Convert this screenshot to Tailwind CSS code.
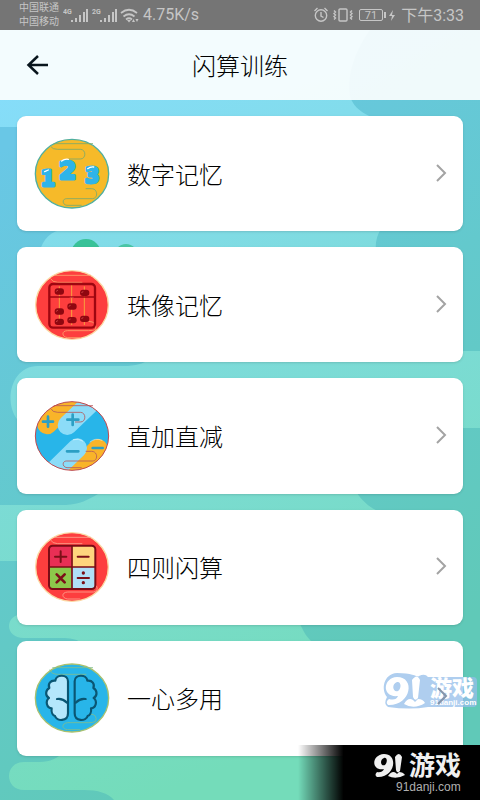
<!DOCTYPE html>
<html lang="zh-CN">
<head>
<meta charset="utf-8">
<meta name="viewport" content="width=device-width, initial-scale=1">
<title>闪算训练</title>
<script src="https://cdn.jsdelivr.net/npm/@tailwindcss/browser@4"></script>
</head>
<body class="font-['Roboto','Noto_Sans_CJK_SC',sans-serif] text-black">
<div class="relative isolate flex min-h-screen flex-col overflow-hidden">

  <!-- Wavy backdrop -->
  <svg class="absolute inset-0 -z-10 h-full w-full" viewBox="0 0 480 800" preserveAspectRatio="none" aria-hidden="true">
    <defs>
      <linearGradient id="deep" gradientUnits="userSpaceOnUse" x1="0" y1="150" x2="330" y2="700">
        <stop offset="0" stop-color="#69c7e6"/><stop offset=".5" stop-color="#63c9cd"/><stop offset="1" stop-color="#60c9b8"/>
      </linearGradient>
      <linearGradient id="pale" gradientUnits="userSpaceOnUse" x1="0" y1="90" x2="250" y2="760">
        <stop offset="0" stop-color="#86ddfa"/><stop offset=".4" stop-color="#7edbdd"/><stop offset="1" stop-color="#74dcba"/>
      </linearGradient>
    </defs>
    <path fill="url(#deep)" d="M0 0H480V800H0Z"/>
    <path fill="url(#pale)" d="M0 0H400C360 30 346 70 350 96C354 110 368 118 390 122L400 210C382 222 374 236 376 252C380 290 420 350 463 351H480V428H400C360 436 344 470 356 492C366 506 376 512 390 515L330 590C300 596 292 612 302 628C310 646 330 656 350 660V800H114C108 793 98 790 84 790H24C4 790 4 762 24 762H40C50 762 58 758 64 752L80 642C76 639 70 638 62 638H24C4 638 4 614 24 614H40V561H0V505H66C80 504 88 500 98 494L60 430H40C0 430 2 366 38 366H128C140 365 145 363 150 358L60 290C30 278 34 236 60 230V127H0Z"/>
    <circle cx="86" cy="254" r="15" fill="#39c298"/>
    <circle cx="126" cy="256" r="12" fill="#4bc6a6"/>
  </svg>

  <!-- System status bar -->
  <div class="flex h-[30px] items-center justify-between bg-[#757575] pr-4 pl-[19px] text-base text-[#c6c6c6]">
    <div class="flex items-center gap-1">
      <div class="text-[10px] leading-[14px]"><p>中国联通</p><p>中国移动</p></div>
      <svg width="76" height="18" viewBox="0 0 76 18" fill="#c6c6c6" aria-hidden="true">
        <g font-family="Roboto, sans-serif" font-size="7" font-weight="700"><text x="0" y="8">4G</text><text x="29" y="8">2G</text></g>
        <path d="M8 14h2v2H8zM12 12h2v4h-2zM16 9h2v7h-2zM20 6h2v10h-2zM23 3h2v13h-2zM37 14h2v2h-2zM41 12h2v4h-2zM45 9h2v7h-2zM49 6h2v10h-2zM52 3h2v13h-2z"/>
        <g fill="none" stroke="#c6c6c6" stroke-width="1.7"><path d="M58 7q8-6.500 16 0M60.500 10.500q5.500-4.500 11 0M63 13.500q3-2.500 6 0"/></g>
        <path d="M64 14h4l-2 2.500zM69 16l1.500-3 1.500 3zM72.500 13l1.500 3 1.500-3z"/>
      </svg>
      <span>4.75K/s</span>
    </div>
    <div class="flex items-center gap-1">
      <svg width="84" height="18" viewBox="0 0 84 18" fill="none" stroke="#c6c6c6" stroke-width="1.400" aria-hidden="true">
        <circle cx="8" cy="9.500" r="5.700"/><path d="M8 6v4l2.500 1.500M1.500 5l3-3M14.500 5l-3-3"/>
        <rect x="26" y="3" width="8" height="12" rx="1"/>
        <path d="M21 4.500l1.500 1.500-1.500 1.500 1.500 1.500-1.500 1.500 1.500 1.500-1.500 1.500M39 4.500L37.500 6 39 7.500 37.500 9l1.500 1.500-1.500 1.500 1.500 1.500"/>
        <rect x="46.500" y="3.500" width="23" height="11" rx="1.500" stroke-width="1"/><path d="M72 6v6" stroke-width="2"/>
        <path d="M80 4l-4 6h3l-1 5 4-6h-3z" fill="#c6c6c6" stroke="none"/>
        <text x="58" y="13" fill="#c6c6c6" stroke="none" font-family="Roboto, sans-serif" font-size="11" text-anchor="middle">71</text>
      </svg>
      <time class="pt-[2px]">下午3:33</time>
    </div>
  </div>

  <header class="grid h-[70px] grid-cols-[1fr_auto_1fr] items-center bg-white/90 px-[25px]">
    <button type="button" aria-label="返回" class="w-6">
      <svg width="24" height="24" viewBox="0 0 24 24" fill="none" stroke="#08151d" stroke-width="2.500" aria-hidden="true"><path d="M13 3L3.500 12 13 21M3.500 12H23"/></svg>
    </button>
    <h1 class="pt-1 text-2xl font-light">闪算训练</h1>
  </header>

  <main class="flex flex-1 flex-col gap-4 px-[17px] pt-4 pb-11">
    <a href="#digits" class="flex min-h-[112px] flex-1 items-center gap-[17px] rounded-[9px] bg-white pr-4 pl-[17px] shadow">
      <svg width="76" height="72" viewBox="27 24 228 216" aria-hidden="true">
        <ellipse cx="141" cy="131" rx="110" ry="103" fill="#f6ba29" stroke="#50afa0" stroke-width="4"/>
        <path d="M86 41H204M78 50Q82 58 98 58H166C184 58 184 87 166 87H130M182 176H200C219 176 220 206 202 206H124C110 207 112 225 126 226H170" fill="none" stroke="#79a96c" stroke-width="2.500"/>
        <g fill="#2fb4e8" stroke="#2fb4e8" stroke-width="9" stroke-linejoin="round" font-family="DejaVu Sans, sans-serif" font-weight="700">
          <text x="47" y="169" font-size="62">1</text><text x="101" y="147" font-size="76">2</text><text x="180" y="160" font-size="62">3</text>
        </g>
        <path d="M59 125l11-5M110 93q9-7 20-5M188 116q8-6 18-5" fill="none" stroke="#fff" stroke-width="4" stroke-linecap="round"/>
      </svg>
      <span class="flex-1 pt-1 text-2xl font-light">数字记忆</span>
      <svg width="12" height="20" viewBox="0 0 12 20" fill="none" stroke="#a3a3a3" stroke-width="2" aria-hidden="true"><path d="M2 1L10 9 2 17"/></svg>
    </a>

    <a href="#beads" class="flex min-h-[112px] flex-1 items-center gap-[17px] rounded-[9px] bg-white pr-4 pl-[17px] shadow">
      <svg width="76" height="72" viewBox="27 24 228 216" aria-hidden="true">
        <ellipse cx="141" cy="132" rx="109" ry="103" fill="#fd3e3e" stroke="#fbd9a4" stroke-width="4"/>
        <path d="M88 43H198M76 52Q82 64 98 64H172M190 181Q217 182 212 205Q206 209 190 209H128C108 209 110 228 128 230H166" fill="none" stroke="#fca36e" stroke-width="2.500"/>
        <path d="M103 76V192M140 70V192M178 76V192" stroke="#f7a23d" stroke-width="3"/>
        <rect x="73" y="69" width="137" height="131" rx="11" fill="none" stroke="#9e0610" stroke-width="7"/>
        <path d="M73 108H210" stroke="#9e0610" stroke-width="5"/>
        <g fill="#8f0710"><rect x="89" y="82" width="28" height="19" rx="9"/><rect x="165" y="86" width="28" height="19" rx="9"/><rect x="127" y="127" width="28" height="19" rx="9"/><rect x="89" y="142" width="28" height="19" rx="9"/><rect x="89" y="173" width="28" height="19" rx="9"/><rect x="127" y="168" width="28" height="19" rx="9"/><rect x="165" y="164" width="28" height="19" rx="9"/></g>
        <path d="M94 92q0-4 5-4M170 96q0-4 5-4M132 137q0-4 5-4M94 152q0-4 5-4M94 183q0-4 5-4M132 178q0-4 5-4M170 174q0-4 5-4M134 109h12" fill="none" stroke="#d55" stroke-width="2"/>
      </svg>
      <span class="flex-1 pt-1 text-2xl font-light">珠像记忆</span>
      <svg width="12" height="20" viewBox="0 0 12 20" fill="none" stroke="#a3a3a3" stroke-width="2" aria-hidden="true"><path d="M2 1L10 9 2 17"/></svg>
    </a>

    <a href="#addsub" class="flex min-h-[112px] flex-1 items-center gap-[17px] rounded-[9px] bg-white pr-4 pl-[17px] shadow">
      <svg width="76" height="72" viewBox="27 24 228 216" aria-hidden="true">
        <clipPath id="disc"><ellipse cx="141" cy="132" rx="110" ry="103"/></clipPath>
        <g clip-path="url(#disc)">
          <path d="M20 20H260V240H20Z" fill="#28b5e9"/>
          <g fill="none" stroke-width="58" stroke-linecap="round">
            <path d="M66 98L170 -2" stroke="#f9b429"/><path d="M219 170L119 270" stroke="#f9b429"/>
            <path d="M127 100L227 4" stroke="#8cdcf8"/><path d="M157 168L57 266" stroke="#8cdcf8"/>
          </g>
          <path d="M195 150q16-14 36-5M145 143q16-5 28 4" fill="none" stroke="#fff" stroke-opacity=".5" stroke-width="3" stroke-linecap="round"/>
        </g>
        <g stroke="#2b9fc4" stroke-width="8" stroke-linecap="round"><path d="M54 89H84M69 74V104M127 83H160M143 68V99M126 178H160M203 168H233"/></g>
        <path d="M86 41H204M78 50Q82 61 98 61H166C184 61 184 90 166 90H150M182 178H200C219 178 220 207 202 207H124C110 208 112 226 126 227H170" fill="none" stroke="#b4595c" stroke-width="2.500"/>
        <ellipse cx="141" cy="132" rx="110" ry="103" fill="none" stroke="#c4494d" stroke-width="3"/>
      </svg>
      <span class="flex-1 pt-1 text-2xl font-light">直加直减</span>
      <svg width="12" height="20" viewBox="0 0 12 20" fill="none" stroke="#a3a3a3" stroke-width="2" aria-hidden="true"><path d="M2 1L10 9 2 17"/></svg>
    </a>

    <a href="#four" class="flex min-h-[112px] flex-1 items-center gap-[17px] rounded-[9px] bg-white pr-4 pl-[17px] shadow">
      <svg width="76" height="72" viewBox="27 24 228 216" aria-hidden="true">
        <ellipse cx="141" cy="132" rx="109" ry="103" fill="#fd3e3e" stroke="#fbd9a4" stroke-width="4"/>
        <path d="M88 43H198M76 50Q82 62 98 62H172M214 188Q222 203 206 207H128C108 208 110 226 128 228H166" fill="none" stroke="#fca38e" stroke-width="2.500"/>
        <path d="M73 69H140V132H73Z" fill="#e82f55"/><path d="M140 69H210V132H140Z" fill="#ffd57e"/><path d="M73 132H140V197H73Z" fill="#8cc84b"/><path d="M140 132H210V197H140Z" fill="#b0dff7"/>
        <rect x="72" y="68" width="139" height="130" rx="11" fill="none" stroke="#7b0c16" stroke-width="6"/>
        <path d="M72 132H211M141 68V198" stroke="#7b0c16" stroke-width="5"/>
        <g stroke="#7b1018" stroke-width="6" stroke-linecap="round"><path d="M90 101H124M107 85V117M158 101H191M158 165H192"/><path d="M95 154L119 178M119 154L95 178" stroke-width="8"/></g>
        <circle cx="175" cy="150" r="5" fill="#7b1018"/><circle cx="175" cy="179" r="5" fill="#7b1018"/>
      </svg>
      <span class="flex-1 pt-1 text-2xl font-light">四则闪算</span>
      <svg width="12" height="20" viewBox="0 0 12 20" fill="none" stroke="#a3a3a3" stroke-width="2" aria-hidden="true"><path d="M2 1L10 9 2 17"/></svg>
    </a>

    <a href="#multitask" class="flex min-h-[112px] flex-1 items-center gap-[17px] rounded-[9px] bg-white pr-4 pl-[17px] shadow">
      <svg width="76" height="72" viewBox="27 24 228 216" aria-hidden="true">
        <ellipse cx="141" cy="132" rx="110" ry="102" fill="#28b5e9" stroke="#a9c16f" stroke-width="4"/>
        <path d="M82 41H204M74 47Q80 61 98 61H184M196 180Q218 182 212 202Q206 206 190 206H128C108 208 110 226 128 227H166" fill="none" stroke="#7fbd8e" stroke-width="2.500"/>
        <g stroke="#0a5673" stroke-width="6.500" stroke-linecap="round" stroke-linejoin="round">
          <path fill="#b4e7fc" d="M129 82C129 60 93 60 91 80C76 78 68 90 73 102C61 108 60 126 72 132C60 142 65 162 80 163C78 176 84 184 90 186C94 202 129 204 129 178Z"/>
          <path fill="none" d="M149 82C149 60 185 60 187 80C202 78 210 90 205 102C217 108 218 126 206 132C218 142 213 162 198 163C200 176 194 184 188 186C184 202 149 204 149 178Z"/>
          <path fill="none" d="M96 135Q112 132 126 146M182 135Q166 132 152 146"/>
        </g>
      </svg>
      <span class="flex-1 pt-1 text-2xl font-light">一心多用</span>
      <svg width="12" height="20" viewBox="0 0 12 20" fill="none" stroke="#a3a3a3" stroke-width="2" aria-hidden="true"><path d="M2 1L10 9 2 17"/></svg>
    </a>
  </main>

  <!-- Translucent site mark -->
  <svg class="pointer-events-none absolute right-0 bottom-[80px]" width="100" height="58" viewBox="-2 -10 100 58" role="img" aria-label="91游戏 91danji.com">
    <g fill="#94bee9" stroke="#94bee9" stroke-linejoin="round" opacity=".75">
      <path d="M15 1C32 1 36 6 37 4Q43 1 46 5H91Q95 5 95 9V31Q95 35 91 35H46Q28 38 6 35Q1 32 5 25C-1 18 1 2 15 1Z" stroke="none"/>
    </g>
    <g fill="#fff">
      <path fill-rule="evenodd" d="M15 5C34 5 29 34 6 33Q3 30 7 27Q14 29 16 24C0 26 0 6 15 5ZM15 10C9 12 11 21 16 19C20 16 19 9 15 10Z"/>
      <path d="M30 8q5-7 8 0l-2 18q-3 4-5-1zM22 32q4-7 9-4l2 2 3-3q5 0 7 4q-11 7-21 1z"/>
      <text x="48" y="24" font-family="Noto Sans CJK SC, sans-serif" font-size="22" font-weight="900">游戏</text>
      <text x="48" y="33" font-family="Liberation Sans, sans-serif" font-size="8" font-weight="700">91danji.com</text>
    </g>
    <path d="M56 16l8 8-8 8" fill="none" stroke="#8595aa" stroke-width="2"/>
  </svg>

  <!-- Corner site banner -->
  <div class="absolute right-0 bottom-0 h-[55px] w-[182px] bg-linear-to-r from-transparent to-black to-25%">
    <svg class="ml-auto" width="110" height="55" viewBox="0 0 110 55" fill="#f0f0f0" role="img" aria-label="91游戏 91danji.com">
      <path fill-rule="evenodd" d="M14 9C29 9 25 33 7 32Q4 30 7 27Q12 28 14 24C1 26 1 10 14 9ZM14 13C9 15 11 22 15 20C18 17 17 12 14 13Z"/>
      <path d="M25 12q4-6 7 0l-2 14q-3 3-4-1zM18 31q4-6 8-3l1 1 2-2q4 0 6 3q-9 5-17 1z"/>
      <text x="39" y="30" font-family="Noto Sans CJK SC, sans-serif" font-size="26" font-weight="700">游戏</text>
      <text x="26" y="46" fill="#b0b0b0" font-family="Liberation Sans, sans-serif" font-size="12">91danji.com</text>
    </svg>
  </div>
</div>
</body>
</html>
